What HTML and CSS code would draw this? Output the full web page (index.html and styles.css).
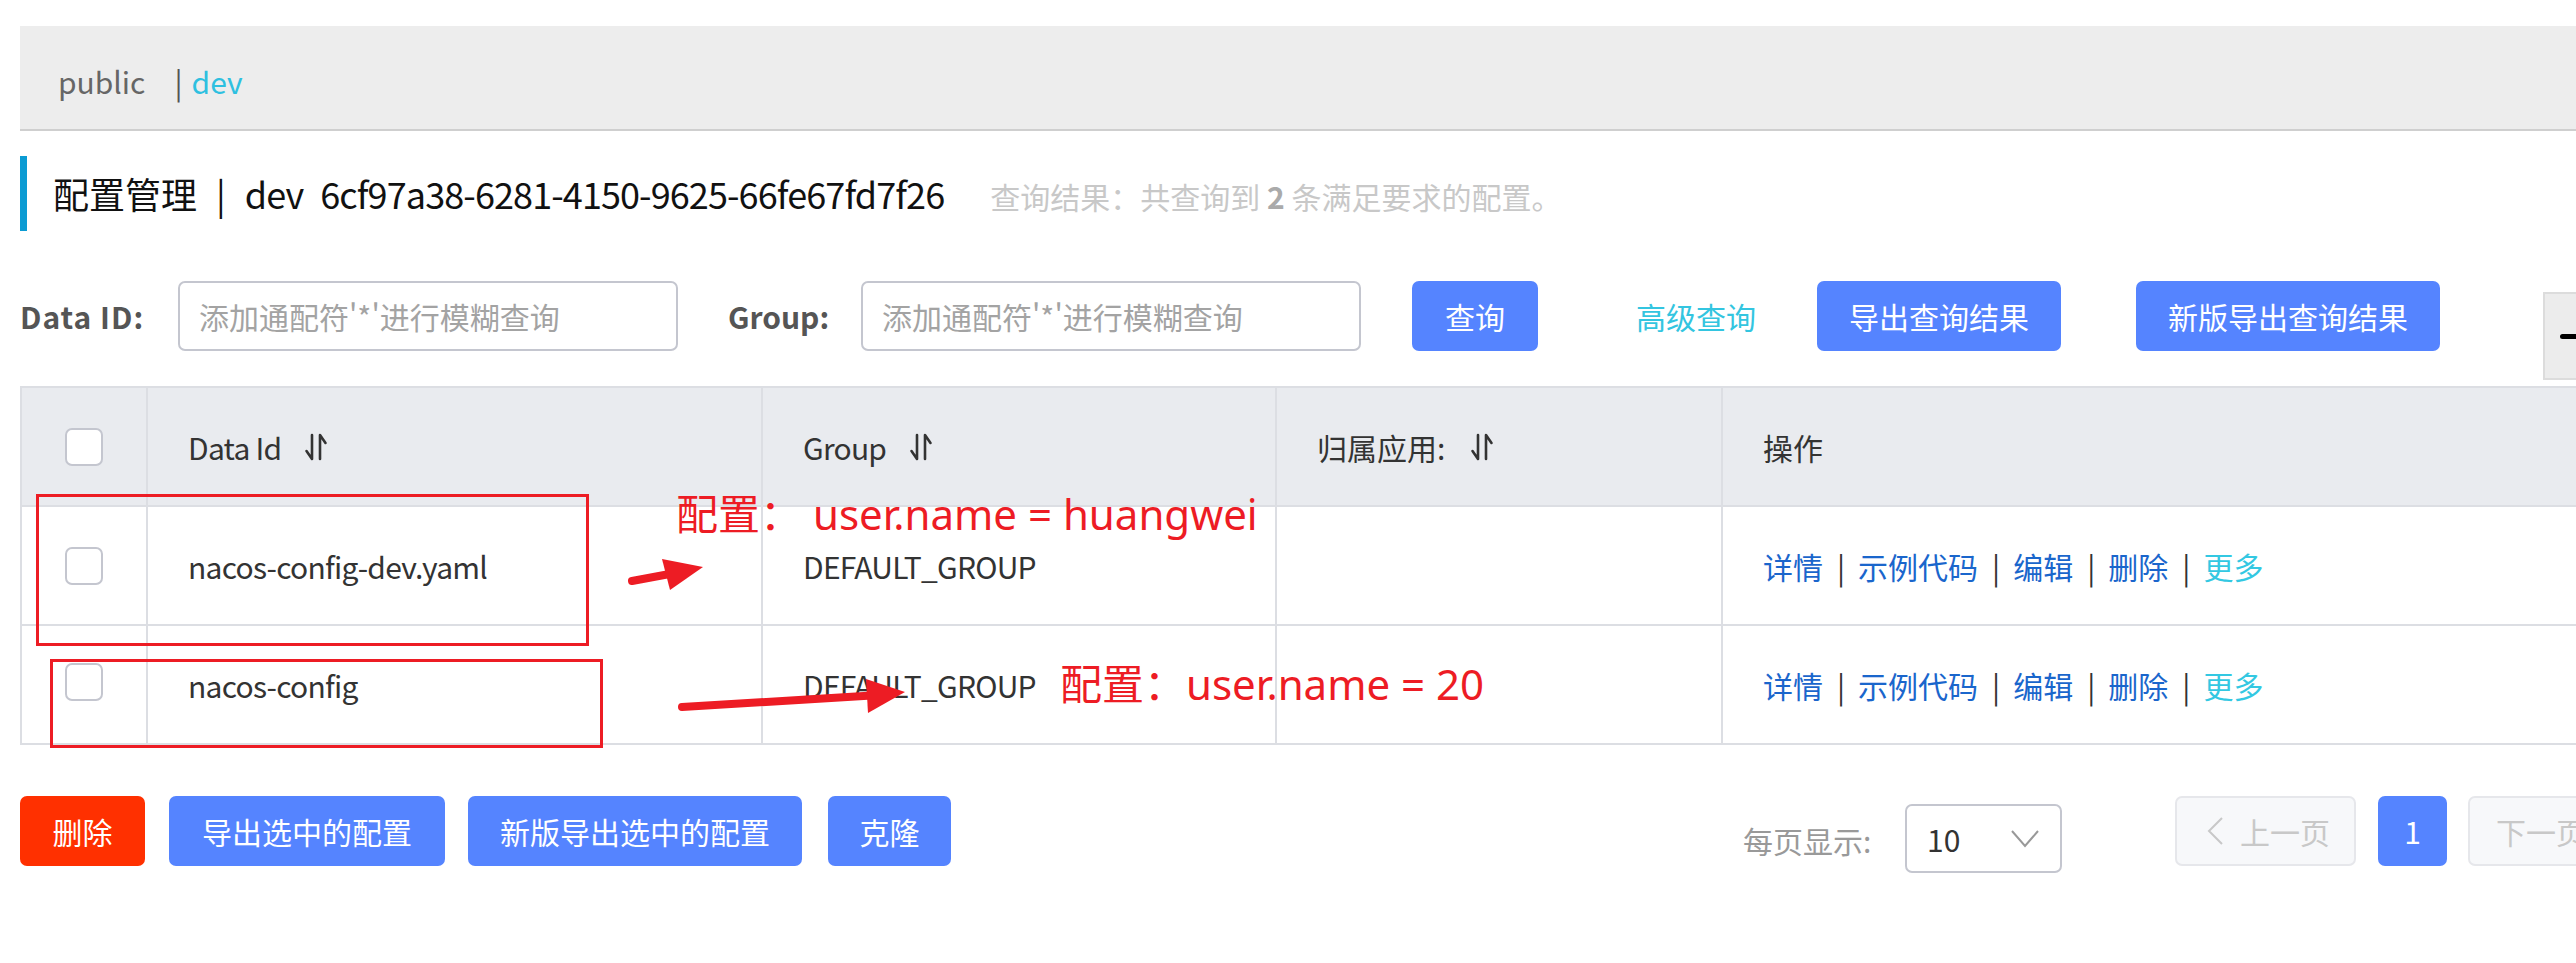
FILE: index.html
```html
<!DOCTYPE html>
<html lang="zh-CN">
<head>
<meta charset="utf-8">
<title>配置管理</title>
<link rel="stylesheet" href="styles.css">
</head>
<body>
<div class="page">
  <div class="nsbar">
    <span class="ns">public</span><span class="ns-sep">|</span><span class="ns ns-active">dev</span>
  </div>

  <div class="title">
    <span>配置管理</span><span class="title-bar">|</span><span class="title-lat">dev</span><span class="title-id title-lat">6cf97a38-6281-4150-9625-66fe67fd7f26</span><span class="result">查询结果：共查询到 <b>2</b> 条满足要求的配置。</span>
  </div>

  <div class="search">
    <label class="lbl lbl-id">Data ID:</label>
    <input class="input" type="text" placeholder="添加通配符'*'进行模糊查询">
    <label class="lbl lbl-group">Group:</label>
    <input class="input" type="text" placeholder="添加通配符'*'进行模糊查询">
    <button class="btn btn-query">查询</button>
    <a class="adv">高级查询</a>
    <button class="btn btn-export">导出查询结果</button>
    <button class="btn btn-export2">新版导出查询结果</button>
    <div class="collapse"><span class="dash"></span></div>
  </div>

  <div class="table">
    <div class="tr th">
      <div class="cell cell-cb"><span class="cb"></span></div>
      <div class="cell lat">Data Id<svg class="sort" width="26" height="28" viewBox="0 0 26 28"><path d="M9 2 V26 L3.5 18 M17 26 V2 L22.5 10" fill="none" stroke="#333" stroke-width="2.6" stroke-linecap="round" stroke-linejoin="round"/></svg></div>
      <div class="cell lat">Group<svg class="sort" width="26" height="28" viewBox="0 0 26 28"><path d="M9 2 V26 L3.5 18 M17 26 V2 L22.5 10" fill="none" stroke="#333" stroke-width="2.6" stroke-linecap="round" stroke-linejoin="round"/></svg></div>
      <div class="cell">归属应用:<svg class="sort sort-app" width="26" height="28" viewBox="0 0 26 28"><path d="M9 2 V26 L3.5 18 M17 26 V2 L22.5 10" fill="none" stroke="#333" stroke-width="2.6" stroke-linecap="round" stroke-linejoin="round"/></svg></div>
      <div class="cell">操作</div>
    </div>
    <div class="tr">
      <div class="cell cell-cb"><span class="cb"></span></div>
      <div class="cell lat">nacos-config-dev.yaml</div>
      <div class="cell lat">DEFAULT_GROUP</div>
      <div class="cell"></div>
      <div class="cell ops"><a>详情</a><span class="sep">|</span><a>示例代码</a><span class="sep">|</span><a>编辑</a><span class="sep">|</span><a>删除</a><span class="sep">|</span><a class="more">更多</a></div>
    </div>
    <div class="tr">
      <div class="cell cell-cb cell-cb-up"><span class="cb"></span></div>
      <div class="cell lat">nacos-config</div>
      <div class="cell lat">DEFAULT_GROUP</div>
      <div class="cell"></div>
      <div class="cell ops"><a>详情</a><span class="sep">|</span><a>示例代码</a><span class="sep">|</span><a>编辑</a><span class="sep">|</span><a>删除</a><span class="sep">|</span><a class="more">更多</a></div>
    </div>
  </div>

  <div class="footer">
    <button class="btn btn-danger">删除</button>
    <button class="btn btn-f2">导出选中的配置</button>
    <button class="btn btn-f3">新版导出选中的配置</button>
    <button class="btn btn-f4">克隆</button>
    <div class="pager">
      <span class="pager-label">每页显示:</span>
      <div class="select"><span>10</span><svg width="30" height="19" viewBox="0 0 30 19"><polyline points="2,2 15,17 28,2" fill="none" stroke="#999" stroke-width="2"/></svg></div>
      <button class="pg pg-prev"><svg class="prev-ico" width="18" height="28" viewBox="0 0 18 28"><polyline points="16,1 3,14 16,27" fill="none" stroke="#c8c8c8" stroke-width="2"/></svg>上一页</button>
      <button class="pg pg-cur">1</button>
      <button class="pg pg-next">下一页</button>
    </div>
  </div>
</div>

<svg class="annot" width="2576" height="963" viewBox="0 0 2576 963">
  <rect x="37.5" y="495.5" width="550" height="149" fill="none" stroke="#ed1c24" stroke-width="3"/>
  <rect x="51.5" y="660.5" width="550" height="86" fill="none" stroke="#ed1c24" stroke-width="3"/>
  <line x1="632" y1="581" x2="675" y2="573" stroke="#ed1c24" stroke-width="8" stroke-linecap="round"/>
  <polygon points="703,567 662,559 670,590" fill="#ed1c24"/>
  <line x1="682" y1="707" x2="880" y2="695" stroke="#ed1c24" stroke-width="8" stroke-linecap="round"/>
  <polygon points="905,692 866,679 868,713" fill="#ed1c24"/>
</svg>
<div class="note note1">配置： user.name = huangwei</div>
<div class="note note2">配置：user.name = 20</div>
</body>
</html>
```

FILE: styles.css
```css
html, body {
  margin: 0;
  padding: 0;
}
body {
  font-family: "Noto Sans CJK SC", "Noto Sans", sans-serif;
  color: #333;
  background: #fff;
  width: 2576px;
  height: 963px;
  overflow: hidden;
  position: relative;
}
.page {
  width: 2720px;
  padding: 26px 0 0 20px;
  box-sizing: border-box;
}

/* namespace bar */
.nsbar {
  height: 69px;
  padding: 34px 0 0 38px;
  background: #ededed;
  border-bottom: 2px solid #cfcfcf;
  font-size: 30px;
  line-height: 42px;
  white-space: nowrap;
}
.ns { color: #666; }
.ns-sep { color: #555; margin: 0 9px 0 29px; }
.ns-active { color: #2ec0e0; }

/* title */
.title {
  margin-top: 25px;
  height: 75px;
  line-height: 75px;
  border-left: 7px solid #0b9bd3;
  padding-left: 26px;
  font-size: 36px;
  color: #111;
  white-space: nowrap;
}
.title-bar { margin: 0 19px 0 19px; }
.title-lat { letter-spacing: -0.9px; }
.title-id { margin-left: 17px; }
.result {
  font-size: 30px;
  color: #c8c8c8;
  margin-left: 46px;
  letter-spacing: 0;
}
.result b { color: #aaa; font-weight: bold; }

/* search */
.search {
  display: flex;
  align-items: flex-start;
  margin-top: 50px;
  white-space: nowrap;
}
.lbl {
  font-size: 30px;
  font-weight: bold;
  color: #555;
  line-height: 70px;
}
.lbl-id { width: 158px; letter-spacing: 1px; }
.lbl-group { width: 133px; margin-left: 50px; }
.input {
  width: 500px;
  height: 70px;
  box-sizing: border-box;
  border: 2px solid #c4c6cf;
  border-radius: 7px;
  padding: 0 19px;
  font-size: 30px;
  font-family: inherit;
  color: #333;
  outline: none;
  background: #fff;
}
.input::placeholder { color: #a3a3a3; }
.btn {
  height: 70px;
  border: 0;
  border-radius: 7px;
  background: #5584ff;
  color: #fff;
  font-size: 30px;
  font-family: inherit;
  line-height: 70px;
  padding: 0;
  text-align: center;
  white-space: nowrap;
}
.btn-query { width: 126px; margin-left: 51px; }
.adv {
  margin-left: 98px;
  font-size: 30px;
  line-height: 70px;
  color: #33c5e0;
}
.btn-export { width: 244px; margin-left: 61px; }
.btn-export2 { width: 304px; margin-left: 75px; }
.collapse {
  margin-left: 103px;
  margin-top: 11px;
  width: 70px;
  height: 84px;
  background: #ececec;
  border: 2px solid #dcdcdc;
  display: flex;
  align-items: center;
  padding-left: 15px;
}
.dash {
  width: 30px;
  height: 5px;
  border-radius: 3px;
  background: #000;
}

/* table */
.table {
  margin-top: 6px;
  border-top: 2px solid #dcdee3;
  border-left: 2px solid #dcdee3;
}
.tr {
  display: grid;
  grid-template-columns: 124px 615px 514px 446px 1fr;
  height: 117px;
  border-bottom: 2px solid #dcdee3;
}
.th { background: #e9ebef; }
.cell {
  display: flex;
  align-items: center;
  padding-left: 40px;
  border-left: 2px solid #dcdee3;
  font-size: 30px;
  white-space: nowrap;
  color: #333;
}
.lat { letter-spacing: -0.75px; }
.cell-cb {
  justify-content: center;
  padding-left: 0;
  border-left: 0;
}
.cell-cb-up { padding-bottom: 6px; box-sizing: border-box; }
.cb {
  width: 38px;
  height: 38px;
  box-sizing: border-box;
  border: 2px solid #c4c6cf;
  border-radius: 7px;
  background: #fff;
}
.sort { margin-left: 22px; }
.sort-app { margin-left: 24px; }
.ops a { color: #1a66cc; }
.ops .sep { color: #333; margin: 0 13px 0 14px; }
.ops .more { color: #33c8e2; }

/* footer */
.footer {
  display: flex;
  align-items: flex-start;
  margin-top: 51px;
}
.btn-danger { width: 125px; background: #ff3000; }
.btn-f2 { width: 276px; margin-left: 24px; }
.btn-f3 { width: 334px; margin-left: 23px; }
.btn-f4 { width: 123px; margin-left: 26px; }
.pager {
  display: flex;
  align-items: flex-start;
  margin-left: 792px;
  white-space: nowrap;
}
.pager-label {
  width: 162px;
  margin-top: 9px;
  font-size: 30px;
  line-height: 70px;
  color: #999;
}
.select {
  margin-top: 8px;
  width: 157px;
  height: 69px;
  box-sizing: border-box;
  border: 2px solid #c4c6cf;
  border-radius: 7px;
  display: flex;
  align-items: center;
  justify-content: space-between;
  padding: 0 20px;
  font-size: 30px;
  color: #333;
}
.pg {
  height: 70px;
  box-sizing: border-box;
  border: 2px solid #e6e7eb;
  background: #f7f8fa;
  color: #c8c8c8;
  border-radius: 7px;
  font-size: 30px;
  font-family: inherit;
  padding: 0;
  white-space: nowrap;
}
.pg-prev {
  margin-left: 113px;
  width: 181px;
  display: flex;
  align-items: center;
  padding-left: 29px;
}
.prev-ico { margin-right: 16px; }
.pg-cur {
  margin-left: 22px;
  width: 69px;
  background: #5584ff;
  border-color: #5584ff;
  color: #fff;
  text-align: center;
}
.pg-next {
  margin-left: 21px;
  width: 181px;
  padding-left: 26px;
  text-align: left;
}

/* annotations drawn over the screenshot */
.annot {
  position: absolute;
  left: 0;
  top: 0;
  pointer-events: none;
}
.note {
  position: absolute;
  font-family: "Noto Sans", "Noto Sans CJK SC", sans-serif;
  font-size: 42px;
  line-height: 42px;
  color: #ed1c24;
  white-space: nowrap;
}
.note1 { left: 676px; top: 493px; }
.note2 { left: 1060px; top: 663px; }
```
